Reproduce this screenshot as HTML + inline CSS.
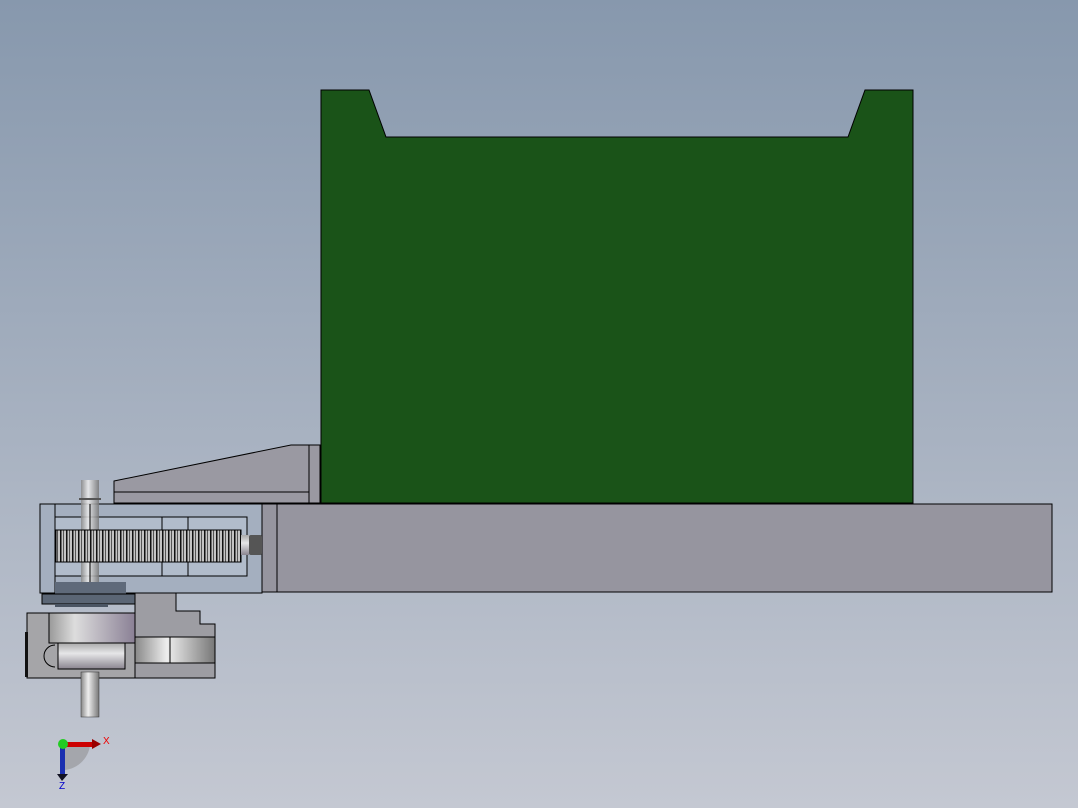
<!DOCTYPE html>
<html><head><style>html,body{margin:0;padding:0;width:1078px;height:808px;overflow:hidden}</style></head><body>
<svg width="1078" height="808" xmlns="http://www.w3.org/2000/svg">
<defs>
<linearGradient id="bg" x1="0" y1="0" x2="0" y2="1"><stop offset="0" stop-color="#8798ad"/><stop offset="1" stop-color="#c4c8d2"/></linearGradient>
<linearGradient id="cyl" x1="0" y1="0" x2="1" y2="0"><stop offset="0" stop-color="#888"/><stop offset="0.4" stop-color="#eee"/><stop offset="1" stop-color="#777"/></linearGradient>
<linearGradient id="cylv" x1="0" y1="0" x2="0" y2="1"><stop offset="0" stop-color="#aaa"/><stop offset="0.4" stop-color="#e6e6e8"/><stop offset="1" stop-color="#8a8590"/></linearGradient>
<linearGradient id="drum" x1="0" y1="0" x2="1" y2="0"><stop offset="0" stop-color="#999"/><stop offset="0.3" stop-color="#ddd"/><stop offset="1" stop-color="#8a8095"/></linearGradient>
<pattern id="teeth" width="6" height="40" patternUnits="userSpaceOnUse"><rect width="6" height="40" fill="#c4c4c4"/><rect width="1.5" height="40" fill="#111"/><rect x="3" width="1" height="40" fill="#555"/></pattern>
</defs>
<rect width="1078" height="808" fill="url(#bg)"/>
<polygon points="321,90 369,90 386,137 848,137 865,90 913,90 913,503 321,503" fill="#1a5318" stroke="#000" stroke-width="1"/>
<polygon points="114,481 291,445 320,445 320,503 114,503" fill="#9a99a2" stroke="#000" stroke-width="1"/>
<line x1="114" y1="492" x2="309" y2="492" stroke="#000"/>
<line x1="309" y1="445" x2="309" y2="503" stroke="#000"/>
<rect x="277" y="504" width="775" height="88" fill="#96959f" stroke="#000"/>
<rect x="262" y="504" width="15" height="88" fill="#96959f" stroke="#000"/>
<rect x="40" y="504" width="222" height="89" fill="#a4afbf" stroke="#000" stroke-width="1"/>
<rect x="55" y="517" width="192" height="59" fill="#b1bccb" stroke="#000"/>
<line x1="162" y1="517" x2="162" y2="576" stroke="#000"/>
<line x1="188" y1="517" x2="188" y2="576" stroke="#000"/>
<line x1="55" y1="504" x2="55" y2="593" stroke="#000"/>
<rect x="81" y="480" width="18" height="104" fill="url(#cyl)" opacity="0.85"/>
<rect x="79" y="498" width="22" height="2" fill="#555"/>
<line x1="90" y1="504" x2="90" y2="593" stroke="#000"/>
<rect x="56" y="530" width="185" height="32" fill="url(#teeth)" stroke="#000"/>
<rect x="241" y="535" width="8" height="20" fill="url(#cylv)"/>
<rect x="249" y="535" width="13" height="20" fill="#555" rx="2"/>
<rect x="55" y="582" width="71" height="12" fill="#5f6a7a"/>
<rect x="42" y="594" width="96" height="10" fill="#5b6675" stroke="#000"/>
<rect x="55" y="604" width="53" height="3" fill="#4b5563"/>
<polygon points="135,593 176,593 176,611 200,611 200,624 215,624 215,678 135,678" fill="#9d9da3" stroke="#000"/>
<rect x="135" y="637" width="80" height="26" fill="url(#cyl)" stroke="#000"/>
<line x1="170" y1="637" x2="170" y2="663" stroke="#000"/>
<rect x="27" y="613" width="108" height="65" fill="#a5a5a8" stroke="#000"/>
<rect x="49" y="613" width="86" height="30" fill="url(#drum)" stroke="#000"/>
<rect x="58" y="643" width="67" height="26" fill="url(#cylv)" stroke="#000"/>
<path d="M55,645 a10,10 0 0 0 0,22" fill="none" stroke="#000"/>
<rect x="25" y="632" width="3" height="45" fill="#111"/>
<rect x="81" y="672" width="18" height="45" fill="url(#cyl)" stroke="#333" stroke-width="0.5"/>
<path d="M62,745 L62,770 A28,28 0 0 0 90,745 Z" fill="#888" opacity="0.5"/>
<rect x="62" y="742" width="30" height="5" fill="#c00"/>
<polygon points="92,739 101,744 92,749" fill="#900"/>
<rect x="60" y="744" width="5" height="30" fill="#1a2fb0"/>
<polygon points="57,774 68,774 62,781" fill="#112"/>
<circle cx="63" cy="744" r="5" fill="#2c2"/>
<text x="103" y="744" font-family="Liberation Sans,sans-serif" font-size="10" fill="#e00">X</text>
<text x="59" y="789" font-family="Liberation Sans,sans-serif" font-size="10" fill="#00c">Z</text>
</svg>
</body></html>
